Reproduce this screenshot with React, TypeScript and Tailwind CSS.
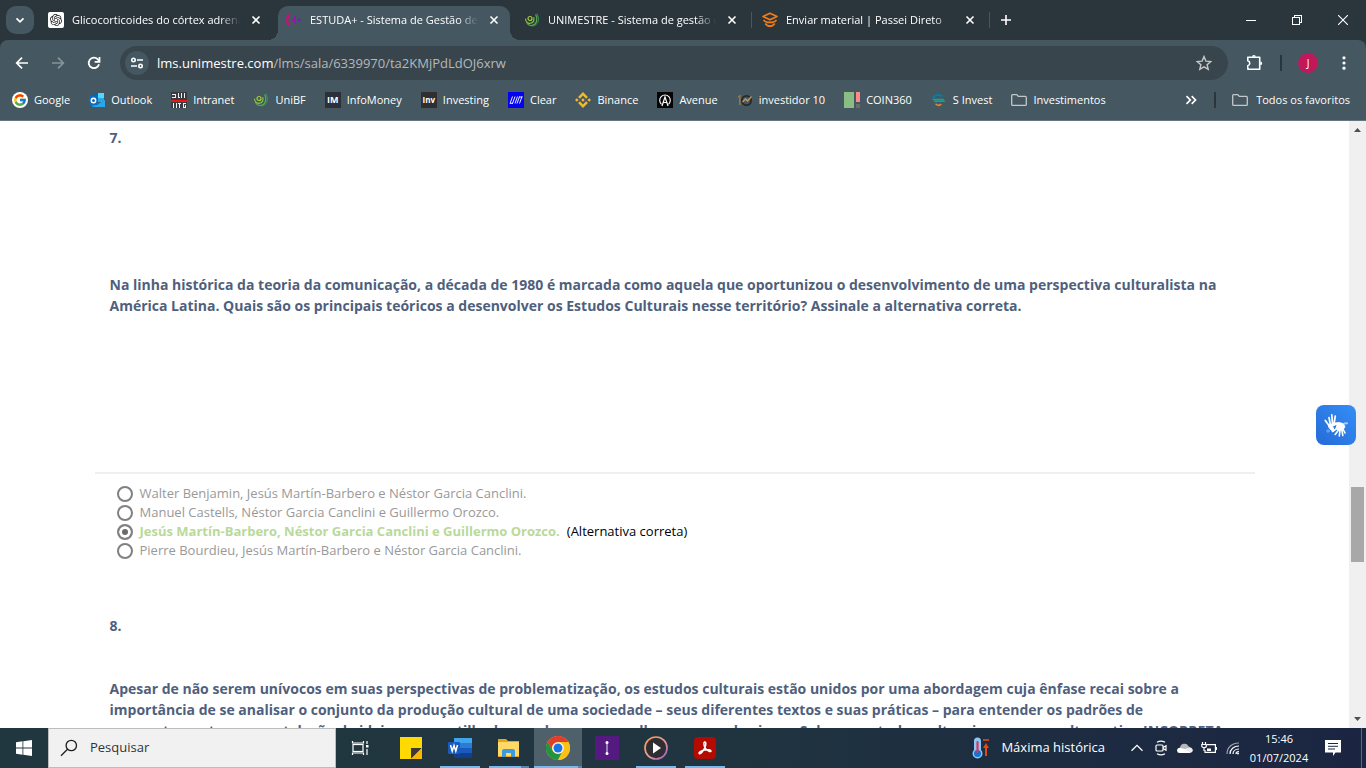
import React from 'react';
import { FcGoogle } from 'react-icons/fc';
import { SiOpenai, SiBinance } from 'react-icons/si';

interface IconProps {
  className?: string;
}

interface Tab {
  title: string;
  icon: React.ReactNode;
  active?: boolean;
  separator?: boolean;
}

interface Bookmark {
  label: string;
  icon: React.ReactNode;
}

interface Option {
  text: string;
  correct?: boolean;
}

/* Favicons */

const EstudaIcon = () => (
  <svg viewBox="0 0 16 16" className="size-4">
    <path d="M2.800 3.200C.6 5.500.6 10.500 2.800 12.800" fill="none" stroke="#e6007e" strokeWidth="2" strokeLinecap="round" />
    <path d="M6 8h3" stroke="#b00ba0" strokeWidth="1.600" />
    <path d="M9 5v6" stroke="#9c10b4" strokeWidth="1.800" strokeLinecap="round" />
    <circle cx="13.200" cy="8" r="1.500" fill="#7d12cf" />
  </svg>
);

const UnimestreIcon = () => (
  <svg viewBox="0 0 16 16" className="size-4" fill="none" strokeLinecap="round">
    <circle cx="6" cy="6.500" r="2" stroke="#a6ce39" strokeWidth="1.200" />
    <path d="M1.500 7c.3 3.300 2.500 4.600 4.800 4.300 2.600-.4 4-2.600 3.600-5.800" stroke="#8cc63f" strokeWidth="1.100" />
    <path d="M3 11.500c3 3.400 8 2.200 9.400-1.700.8-2.500.4-5.300-.6-7" stroke="#5bb04b" strokeWidth="1.100" />
    <path d="M8 14c4.500-.3 7-3.800 6.300-8-.2-1.600-.6-2.900-1.200-4" stroke="#2f9e5b" strokeWidth="1" />
  </svg>
);

const PasseiIcon = () => (
  <svg viewBox="0 0 16 16" className="size-4" fill="none" stroke="#f57c14" strokeWidth="1.700" strokeLinejoin="round">
    <path d="M8 1.300l7 3.200-7 3.200-7-3.200z" />
    <path d="M1.500 8c1 1.300 3 2.200 4.200 2.300h4.600c1.200-.1 3.200-1 4.200-2.300" />
    <path d="M3.300 11.500c2.300 3.600 7.100 3.600 9.400 0" />
  </svg>
);

const OutlookIcon = () => (
  <svg viewBox="0 0 16 16" className="size-4">
    <path d="M4 1h11v9H4z" fill="#28a8ea" />
    <path d="M9 1h6v5H9z" fill="#50d9ff" />
    <path d="M4 1h5v4H4z" fill="#0364b8" />
    <path d="M3 8l6.500 4L16 8v7H3z" fill="#1490df" />
    <path d="M16 8v7H4z" fill="#28a8ea" />
    <rect y="4" width="9" height="9" rx="1" fill="#0f6cbd" />
    <circle cx="4.500" cy="8.500" r="2.200" fill="none" stroke="#fff" strokeWidth="1.400" />
  </svg>
);

const IntranetIcon = () => (
  <svg viewBox="0 0 16 16" className="size-4" shapeRendering="crispEdges">
    <rect width="16" height="16" fill="#383c3f" />
    <path d="M1 2.500h4M1 5.500h4M4.500 2v4M7.500 1v5M10.500 1v5M13.500 1v5M7 5.500h2M2.500 11v5M5.500 11v5M8.500 11v5M7 11.500h3M15 11.500h-3M12.500 11v5M12 15.500h3M14.500 13v3" fill="none" stroke="#eee" />
    <path d="M0 8.500h16" stroke="#f5140c" strokeWidth="2" />
  </svg>
);

const BadgeIcon = ({ className, children }: { className: string; children: React.ReactNode }) => (
  <span className={`flex size-4 items-center justify-center overflow-hidden font-bold text-white ${className}`}>
    {children}
  </span>
);

const ClearIcon = () => (
  <svg viewBox="0 0 16 16" className="size-4">
    <rect width="16" height="16" fill="#0303ee" />
    <path d="M2 11.500l2.500-7M4.500 11.500l2.500-7M7 11.500l2.500-7M9 11.500l2.500-7M11.500 11.500l2.500-7M11 5h3.500M2 11.300h3" stroke="#fff" strokeWidth="0.900" />
  </svg>
);

const AvenueIcon = () => (
  <svg viewBox="0 0 16 16" className="size-4">
    <rect width="16" height="16" fill="#050505" />
    <path d="M4.500 12.300a5.300 5.300 0 1 1 7 0" fill="none" stroke="#fff" strokeWidth="1.100" />
    <path d="M5 14l3-9 3 9M6.300 10.500h3.400" fill="none" stroke="#fff" strokeWidth="1.200" />
  </svg>
);

const InvestidorIcon = () => (
  <svg viewBox="0 0 16 16" className="size-4" fill="none">
    <path d="M1 5l1.800-1.200V13" stroke="#9b7744" strokeWidth="1.500" />
    <circle cx="9.500" cy="8.500" r="4.600" stroke="#26292c" strokeWidth="1.800" />
    <path d="M5.500 10l3-3 2 2 4-4.500" stroke="#c59a5d" strokeWidth="1.300" />
  </svg>
);

const CoinIcon = () => (
  <svg viewBox="0 0 16 16" className="size-4">
    <rect width="10" height="16" fill="#8abd83" />
    <rect x="12" width="4" height="10" fill="#ff8a85" />
    <rect x="12" y="12" width="4" height="4" fill="#6a6c6e" />
  </svg>
);

const SInvestIcon = () => (
  <svg viewBox="0 0 16 16" className="size-4" fill="none">
    <path d="M11.500 4.500C9 2 3.500 2.500 2 6.500" stroke="#087ba8" strokeWidth="2" />
    <path d="M1.500 7.500H13M3 9.300h11" stroke="#12a292" strokeWidth="1.500" />
    <path d="M4.500 11.800c1.800 1.800 4 1.900 5.800.4" stroke="#e08a35" strokeWidth="1.600" />
  </svg>
);

const FolderIcon = () => (
  <svg viewBox="0 0 16 16" className="size-4" fill="none" stroke="#c3c7c9" strokeWidth="1.300">
    <path d="M.7 3.600c0-.6.400-1 1-1h4l1.600 1.800h7c.6 0 1 .4 1 1v7c0 .6-.4 1-1 1H1.700c-.6 0-1-.4-1-1z" />
  </svg>
);

/* Browser icons */

const CloseIcon = () => (
  <svg viewBox="0 0 16 16" className="size-4" stroke="#fff" strokeWidth="1.600">
    <path d="M4.500 4.500l7 7M11.500 4.500l-7 7" />
  </svg>
);

const BackIcon = ({ className = '' }: IconProps) => (
  <svg viewBox="0 0 16 16" className={`size-4 ${className}`} fill="none" stroke="currentColor" strokeWidth="1.700">
    <path d="M14 8H3M8 2.700L2.700 8 8 13.300" />
  </svg>
);

const ReloadIcon = () => (
  <svg viewBox="0 0 16 16" className="size-4" fill="none" stroke="#fff" strokeWidth="1.800">
    <path d="M13 9.200A5.200 5.200 0 1 1 11.800 4.400L13.300 6" />
    <path d="M13.500 2v4.800H8.700" />
  </svg>
);

const TuneIcon = () => (
  <svg viewBox="0 0 16 16" className="size-4" fill="none" stroke="#fff" strokeWidth="1.600">
    <circle cx="4.500" cy="5" r="1.700" />
    <path d="M8 5h6M2 11h6" />
    <circle cx="11.500" cy="11" r="1.700" />
  </svg>
);

const StarIcon = () => (
  <svg viewBox="0 0 16 16" className="size-4" fill="none" stroke="#c3c7c9" strokeWidth="1.400">
    <path d="M8 1.600l1.900 4.500 4.900.4-3.700 3.200 1.100 4.700L8 11.900l-4.200 2.500 1.100-4.700L1.200 6.500l4.900-.4z" />
  </svg>
);

const PuzzleIcon = () => (
  <svg viewBox="0 0 18 18" className="size-[18px]">
    <path d="M2.800 3.300h11.900v12H2.800v-3.500c2.600-.6 2.600-4.400 0-5z" fill="none" stroke="#fff" strokeWidth="1.600" strokeLinejoin="round" />
    <path d="M7 2.800a1.900 1.900 0 0 1 3.800 0zM15.300 7.400a1.900 1.900 0 0 1 0 3.800z" fill="#fff" />
  </svg>
);

/* Taskbar icons */

const WindowsIcon = () => (
  <svg viewBox="0 0 16 16" className="size-4" fill="#fff">
    <path d="M0 2.200L6.500 1.300v6.300H0zM7.300 1.200L16 0v7.600H7.300zM0 8.400h6.500v6.300L0 13.800zM7.300 8.400H16V16l-8.700-1.200z" />
  </svg>
);

const SearchIcon = () => (
  <svg viewBox="0 0 18 18" className="size-[18px] shrink-0" fill="none" stroke="#1d1d1d" strokeWidth="1.300">
    <circle cx="11.300" cy="6.500" r="5.200" />
    <path d="M7.500 10.300L1 16.800" />
  </svg>
);

const TaskViewIcon = () => (
  <svg viewBox="0 0 18 18" className="size-[18px]" fill="none" stroke="#fff" strokeWidth="1.200">
    <rect x="2" y="5.500" width="10" height="7" />
    <path d="M1.500 2v2h11V2M1.500 16v-2h11v2M16 2v3M16 10v6" />
    <rect x="15" y="6" width="2.500" height="2.500" fill="#fff" stroke="none" />
  </svg>
);

const StickyIcon = () => (
  <svg viewBox="0 0 22 22" className="size-[22px]">
    <path d="M0 0h22v22H0z" fill="#ffda00" />
    <path d="M11 22V11h11z" fill="#3d3a36" />
    <path d="M22 11v11H11z" fill="#f9b800" />
  </svg>
);

const WordIcon = () => (
  <svg viewBox="0 0 24 24" className="size-6">
    <path d="M6 2h18v5H6z" fill="#41a5ee" />
    <path d="M6 7h18v5H6z" fill="#2b7cd3" />
    <path d="M6 12h18v5H6z" fill="#185abd" />
    <path d="M6 17h18v5H6z" fill="#103f91" />
    <rect y="6" width="12" height="12" rx="1" fill="#185abd" />
    <path d="M2.500 9l1.700 6.200L6 9.500l1.800 5.700L9.500 9" fill="none" stroke="#fff" strokeWidth="1.500" />
  </svg>
);

const ExplorerIcon = () => (
  <svg viewBox="0 0 24 22" className="h-[22px] w-6">
    <path d="M1 2h8l2 2h11v16H1z" fill="#e8a317" />
    <path d="M1 5h21v14H1z" fill="#ffd867" />
    <path d="M5 20v-6c0-1 .7-2 2-2h9c1.300 0 2 1 2 2v6h-4v-4H9v4z" fill="#3d9bdc" />
  </svg>
);

const ChromeIcon = () => (
  <svg viewBox="0 0 24 24" className="size-6">
    <circle cx="12" cy="12" r="12" fill="#fbc116" />
    <path d="M1.600 6A12 12 0 0 1 22.400 6H12a6 6 0 0 0-5.200 9z" fill="#e33b2e" />
    <path d="M1.600 6l5.200 9A6 6 0 0 0 12 18l3.500-.9L12 24A12 12 0 0 1 1.600 6z" fill="#229342" />
    <path d="M22.400 6A12 12 0 0 1 12 24l5.200-9A6 6 0 0 0 12 6z" fill="#fbc116" />
    <circle cx="12" cy="12" r="5.800" fill="#fff" />
    <circle cx="12" cy="12" r="4.500" fill="#1a73e8" />
  </svg>
);

const PurpleIcon = () => (
  <svg viewBox="0 0 24 24" className="size-6">
    <path d="M0 0h24v24H0z" fill="#551a80" />
    <path d="M12 6v12" stroke="#e9dff0" strokeWidth="1" />
    <circle cx="12" cy="6.500" r="1.500" fill="#fff" />
    <circle cx="12" cy="17.500" r="1.500" fill="#fff" />
  </svg>
);

const MediaIcon = () => (
  <svg viewBox="0 0 24 24" className="size-6">
    <defs>
      <linearGradient id="media-ring" x1="0" y1="0" x2="1" y2="1">
        <stop offset="0" stopColor="#ff9348" />
        <stop offset="0.500" stopColor="#e7a093" />
        <stop offset="1" stopColor="#a455c8" />
      </linearGradient>
    </defs>
    <circle cx="12" cy="12" r="11" fill="#2f2f33" stroke="url(#media-ring)" strokeWidth="1.700" />
    <path d="M9 6.500l8 5.500-8 5.500z" fill="#fff" />
  </svg>
);

const AcrobatIcon = () => (
  <svg viewBox="0 0 22 22" className="size-[22px]">
    <rect width="22" height="22" rx="4" fill="#b30b00" />
    <path d="M10.500 5c1.700-.5 1.600 2.500.5 5.300C9.600 13.700 6.700 17.500 5.300 16.600c-1.200-1 2-3 5.200-3.600 3.400-.7 6.500-.4 6.500.9 0 1.500-3.300.3-5.300-2.300-1.600-2-2.500-6-1.200-6.600z" fill="none" stroke="#fff" strokeWidth="1.500" />
  </svg>
);

const ThermometerIcon = () => (
  <svg viewBox="0 0 20 24" className="h-6 w-5">
    <path d="M3 5a3.500 3.500 0 0 1 7 0v9a5 5 0 1 1-7 0z" fill="#8cc8f5" />
    <circle cx="6.500" cy="17.500" r="3.500" fill="#1672d4" />
    <path d="M6.500 6v10" stroke="#d8375c" strokeWidth="2.200" strokeLinecap="round" />
    <path d="M12 4h6" stroke="#e8490f" strokeWidth="1.600" />
    <path d="M12 12l3-5 3 5h-2v8h-2v-8z" fill="#e8490f" />
  </svg>
);

const ChevronUpIcon = () => (
  <svg viewBox="0 0 16 16" className="size-4" fill="none" stroke="#fff" strokeWidth="1.300">
    <path d="M2.500 10.800L8 5.300l5.500 5.500" />
  </svg>
);

const MeetIcon = () => (
  <svg viewBox="0 0 16 16" className="size-4" fill="none" stroke="#fff" strokeWidth="1.200">
    <rect x="3" y="5" width="7" height="6" rx="1" />
    <path d="M10 7.500l3-1.800v4.600l-3-1.800M4 2.300c2.500-1.400 5.500-1.400 8 0M4 13.700c2.500 1.400 5.500 1.400 8 0" />
  </svg>
);

const CloudIcon = () => (
  <svg viewBox="0 0 16 16" className="size-4">
    <path d="M3 8a4.500 4.500 0 0 1 8.500-1.800A3.700 3.700 0 0 1 12 13H4z" fill="#b5b7bc" />
    <path d="M0 10.500A2.800 2.800 0 0 1 4.500 8.300c3 .2 6 1.800 9.500 4.200-.5.400-1 .5-1.800.5H3A2.800 2.800 0 0 1 0 10.500z" fill="#fff" />
    <path d="M7 9l6-1.600c3 .4 3.600 3.600 1.500 5.200z" fill="#eceef0" />
  </svg>
);

const BatteryIcon = () => (
  <svg viewBox="0 0 16 16" className="size-4" fill="none" stroke="#fff" strokeWidth="1.200">
    <path d="M6 4.600h8.400v7.800H4V10M15.600 7v3" />
    <path d="M1.500 2v2.500M4.500 2v2.500M.8 4.500h4.500v1.800C5.300 8 .8 8 .8 6.300zM3 7.500V11" />
    <path d="M6 8.500h4v2.500H6z" fill="#fff" stroke="none" />
  </svg>
);

const WifiIcon = () => (
  <svg viewBox="0 0 16 16" className="size-4" fill="none" strokeWidth="1.200">
    <path d="M2 14C2 7.500 7 3 14 3" stroke="#9aa3b2" />
    <path d="M5 14c0-4.500 3.800-8 9-8" stroke="#fff" />
    <path d="M8 14c0-3 2.500-5 6-5M11 14c0-1.500 1-2.500 3-2.500" stroke="#fff" />
    <circle cx="13" cy="13.500" r="1" fill="#fff" />
  </svg>
);

const NotificationIcon = () => (
  <svg viewBox="0 0 16 16" className="size-4">
    <path d="M0 0h16v12.500h-5.500L8 16v-3.500H0z" fill="#fff" />
    <path d="M3 3.500h10M3 6.300h10M3 9h7" stroke="#1b2a42" strokeWidth="1" />
  </svg>
);

const HandsIcon = () => (
  <svg viewBox="0 0 24 24" className="size-6" fill="none" stroke="#fff" strokeLinecap="round" strokeLinejoin="round">
    <path d="M6.500 12.500L5 4.500M8.500 11L7.800 1.800M10 11L11.300 3M5.300 13L1.300 7.500" strokeWidth="1.700" />
    <path d="M5 12l5.500-2 2 1.500-4 1.500 1.500 4-2.500.5-2.500-3z" fill="#fff" strokeWidth="1" />
    <path d="M14.500 17l-3.300 4.500M16 17l-.7 6M17.800 16.500l1 6M13.500 15l-5 3.500M18.500 15l2.500 5" strokeWidth="1.600" />
    <path d="M8.500 10.200l7-.6 4 1.200 1.500 3.200-2.500 3-4.500.4-2-2 1-3.200z" fill="#fff" strokeWidth="1" />
    <path d="M20.500 10.500l2.500-.3" stroke="#a9cbfb" strokeWidth="2" />
    <circle cx="4" cy="18" r="1.200" stroke="#8db9f8" strokeWidth="0.800" />
  </svg>
);

/* Data */

const tabs: Tab[] = [
  {
    title: 'Glicocorticoides do córtex adrenal',
    icon: (
      <span className="flex size-4 items-center justify-center rounded-xs bg-white">
        <SiOpenai className="size-3 text-[#222]" />
      </span>
    ),
  },
  { title: 'ESTUDA+ - Sistema de Gestão de Ensino', icon: <EstudaIcon />, active: true },
  { title: 'UNIMESTRE - Sistema de gestão educacional', icon: <UnimestreIcon />, separator: true },
  { title: 'Enviar material | Passei Direto', icon: <PasseiIcon />, separator: true },
];

const bookmarks: Bookmark[] = [
  {
    label: 'Google',
    icon: (
      <span className="flex size-4 items-center justify-center rounded-full bg-white">
        <FcGoogle className="size-3.5" />
      </span>
    ),
  },
  { label: 'Outlook', icon: <OutlookIcon /> },
  { label: 'Intranet', icon: <IntranetIcon /> },
  { label: 'UniBF', icon: <UnimestreIcon /> },
  { label: 'InfoMoney', icon: <BadgeIcon className="bg-[#2b303b] text-[9px]">IM</BadgeIcon> },
  { label: 'Investing', icon: <BadgeIcon className="bg-[#2f2f2f] text-[8px]">Inv</BadgeIcon> },
  { label: 'Clear', icon: <ClearIcon /> },
  { label: 'Binance', icon: <SiBinance className="size-4 text-[#f3ba2f]" /> },
  { label: 'Avenue', icon: <AvenueIcon /> },
  { label: 'investidor 10', icon: <InvestidorIcon /> },
  { label: 'COIN360', icon: <CoinIcon /> },
  { label: 'S Invest', icon: <SInvestIcon /> },
  { label: 'Investimentos', icon: <FolderIcon /> },
];

const options: Option[] = [
  { text: 'Walter Benjamin, Jesús Martín-Barbero e Néstor Garcia Canclini.' },
  { text: 'Manuel Castells, Néstor Garcia Canclini e Guillermo Orozco.' },
  { text: 'Jesús Martín-Barbero, Néstor Garcia Canclini e Guillermo Orozco.', correct: true },
  { text: 'Pierre Bourdieu, Jesús Martín-Barbero e Néstor Garcia Canclini.' },
];

const TabStrip: React.FC = () => {
  return (
    <div className="flex h-10 items-center bg-[#2b363c]">
      <button aria-label="Pesquisar guias" className="mr-1.5 ml-1.5 flex size-7 shrink-0 items-center justify-center rounded-[10px] bg-[#455760]">
        <svg viewBox="0 0 16 16" className="size-4" fill="none" stroke="#fff" strokeWidth="1.800">
          <path d="M4.500 6.300L8 9.800l3.500-3.500" />
        </svg>
      </button>

      {tabs.map((tab) => (
        <div key={tab.title} className="flex h-full max-w-[238px] min-w-0 flex-1 items-end">
          <div className={`relative flex h-[34px] min-w-0 flex-1 items-center gap-2 px-2 pb-1.5 ${tab.active ? 'rounded-t-[10px] bg-[#455760]' : ''}`}>
            {tab.active && (
              <>
                <span className="absolute bottom-0 -left-2.5 size-2.5 bg-[radial-gradient(circle_at_0_0,transparent_10px,#455760_10px)]" />
                <span className="absolute -right-2.5 bottom-0 size-2.5 bg-[radial-gradient(circle_at_100%_0,transparent_10px,#455760_10px)]" />
              </>
            )}
            <span className="shrink-0">{tab.icon}</span>
            <span className="min-w-0 flex-1 overflow-hidden [mask-image:linear-gradient(to_right,#000_88%,transparent)] text-[11px] leading-4 whitespace-nowrap text-white">
              {tab.title}
            </span>
            <button aria-label="Fechar guia" className="shrink-0">
              <CloseIcon />
            </button>
          </div>
          <div className="flex h-full w-1.5 shrink-0 items-center justify-center">
            {tab.separator && <span className="h-4 w-px bg-[#455760]" />}
          </div>
        </div>
      ))}

      <button aria-label="Nova guia" className="flex size-7 shrink-0 items-center justify-center">
        <svg viewBox="0 0 16 16" className="size-4" stroke="#fff" strokeWidth="1.600">
          <path d="M8 3v10M3 8h10" />
        </svg>
      </button>

      <div className="ml-auto flex">
        <button aria-label="Minimizar" className="flex h-10 w-[46px] items-center justify-center">
          <span className="h-px w-2.5 bg-white" />
        </button>
        <button aria-label="Restaurar" className="flex h-10 w-[46px] items-center justify-center">
          <svg viewBox="0 0 10 10" className="size-2.5" fill="none" stroke="#fff" shapeRendering="crispEdges">
            <path d="M.5 2.500h7v7h-7zM2.500 2V.5h7v7H8" />
          </svg>
        </button>
        <button aria-label="Fechar" className="flex h-10 w-[46px] items-center justify-center">
          <svg viewBox="0 0 10 10" className="size-2.5" stroke="#fff" strokeWidth="1.100">
            <path d="M0 0l10 10M10 0L0 10" />
          </svg>
        </button>
      </div>
    </div>
  );
};

const Toolbar: React.FC = () => {
  return (
    <div className="bg-[#2b363c]">
      <div className="flex items-center rounded-t-lg bg-[#455760] px-1 pt-1.5 pb-1.5">
        <button aria-label="Voltar" className="flex w-9 justify-center text-white">
          <BackIcon />
        </button>
        <button aria-label="Avançar" className="flex w-9 justify-center text-[#89949a]">
          <BackIcon className="rotate-180" />
        </button>
        <button aria-label="Recarregar" className="flex w-9 justify-center">
          <ReloadIcon />
        </button>

        <div className="mx-2 flex h-[34px] flex-1 items-center rounded-full bg-[#39454c] pr-4 pl-[5px]">
          <button aria-label="Informações do site" className="flex size-6 shrink-0 items-center justify-center rounded-full bg-[#455760]">
            <TuneIcon />
          </button>
          <p className="ml-2 flex-1 text-[13px] leading-5 text-[#b3b9bc]">
            <span className="text-white">lms.unimestre.com</span>/lms/sala/6339970/ta2KMjPdLdOJ6xrw
          </p>
          <button aria-label="Adicionar aos favoritos">
            <StarIcon />
          </button>
        </div>

        <button aria-label="Extensões" className="flex w-9 justify-center">
          <PuzzleIcon />
        </button>
        <span className="mx-2 h-4 w-0.5 bg-[#2b363c]" />
        <button aria-label="Perfil" className="flex w-9 justify-center">
          <span className="flex size-5 items-center justify-center rounded-full bg-[#c2185b] text-[10px] text-white">J</span>
        </button>
        <button aria-label="Menu" className="flex w-9 justify-center">
          <svg viewBox="0 0 16 16" className="size-4" fill="#fff">
            <circle cx="8" cy="2.800" r="1.600" />
            <circle cx="8" cy="8" r="1.600" />
            <circle cx="8" cy="13.200" r="1.600" />
          </svg>
        </button>
      </div>
    </div>
  );
};

const BookmarksBar: React.FC = () => {
  return (
    <nav className="flex items-center border-b border-[#65757e] bg-[#455760] pr-4 pb-1.5 pl-3 text-[11px] leading-7 text-white">
      <div className="flex min-w-0 flex-1 gap-[19px] overflow-hidden whitespace-nowrap">
        {bookmarks.map((b) => (
          <a key={b.label} href="#" className="flex shrink-0 items-center gap-1.5">
            {b.icon}
            {b.label}
          </a>
        ))}
      </div>
      <button aria-label="Mais favoritos" className="mr-4">
        <svg viewBox="0 0 14 14" className="size-3.5" fill="none" stroke="#fff" strokeWidth="1.700">
          <path d="M2.500 3.200L6.300 7l-3.800 3.800M7.700 3.200L11.500 7l-3.800 3.800" />
        </svg>
      </button>
      <span className="mr-4 h-4 w-0.5 bg-[#2b363c]" />
      <a href="#" className="flex items-center gap-2 whitespace-nowrap">
        <FolderIcon />
        Todos os favoritos
      </a>
    </nav>
  );
};

const Quiz: React.FC = () => {
  return (
    <main className="h-full flex-1 overflow-hidden bg-white px-6 pt-1.5">
      <div className="mx-auto max-w-[1160px] text-sm leading-[21px] font-bold text-[#4f5f7d]">
        <div className="px-[15px]">
          <p>7.</p>
          <p className="mt-[126px]">
            Na linha histórica da teoria da comunicação, a década de 1980 é marcada como aquela que oportunizou o desenvolvimento de uma perspectiva culturalista na América Latina. Quais são os principais teóricos a desenvolver os Estudos Culturais nesse território? Assinale a alternativa correta.
          </p>
        </div>

        <hr className="mt-[156px] border-t-2 border-[#efefef]" />

        <div role="radiogroup" className="mt-2.5 px-[22px] text-[13px] leading-[19px] font-normal text-[#999]">
          {options.map((o) => (
            <div key={o.text} className="flex items-center">
              <label className="flex items-center gap-[7px]">
                <input
                  type="radio"
                  name="q7"
                  defaultChecked={o.correct}
                  className="size-4 appearance-none rounded-full border-2 border-[#808080] bg-white checked:bg-[#6b6b6b] checked:shadow-[inset_0_0_0_3px_white]"
                />
                <span className={o.correct ? 'font-bold text-[#b9d99a]' : ''}>{o.text}</span>
              </label>
              {o.correct && <span className="ml-[7px] text-black">(Alternativa correta)</span>}
            </div>
          ))}
        </div>

        <div className="mt-[55px] px-[15px]">
          <p>8.</p>
          <p className="mt-[42px]">
            Apesar de não serem unívocos em suas perspectivas de problematização, os estudos culturais estão unidos por uma abordagem cuja ênfase recai sobre a importância de se analisar o conjunto da produção cultural de uma sociedade – seus diferentes textos e suas práticas – para entender os padrões de comportamento e a constelação de ideias compartilhadas por homens e mulheres que nela vivem. Sobre os estudos culturais, marque a alternativa INCORRETA.
          </p>
        </div>
      </div>
    </main>
  );
};

const Scrollbar: React.FC = () => {
  return (
    <div className="flex w-[17px] shrink-0 flex-col items-center bg-[#f0f0f0]">
      <svg viewBox="0 0 17 17" className="size-[17px]" fill="#505050">
        <path d="M5 11l3.500-4 3.500 4z" />
      </svg>
      <div className="flex w-full flex-1 flex-col items-center">
        <div className="flex-[349]" />
        <div className="w-[13px] flex-[75] bg-[#a8a8a8]" />
        <div className="flex-[149]" />
      </div>
      <svg viewBox="0 0 17 17" className="size-[17px]" fill="#505050">
        <path d="M5 6l3.500 4L12 6z" />
      </svg>
    </div>
  );
};

const AppButton = ({ label, running, active, stacked, children }: { label: string; running?: boolean; active?: boolean; stacked?: boolean; children: React.ReactNode }) => (
  <button aria-label={label} className={`flex h-10 w-12 flex-col items-center ${active ? 'bg-[#4e6069]' : ''}`}>
    <span className="flex flex-1 items-center pt-0.5">{children}</span>
    <span className={`flex h-0.5 ${active ? 'w-full' : 'w-10'}`}>
      {running && <span className="flex-1 bg-[#76b9ed]" />}
      {stacked && <span className={`${active ? 'w-1' : 'w-2'} bg-[#5686ab]`} />}
    </span>
  </button>
);

const Taskbar: React.FC = () => {
  return (
    <footer className="flex h-10 shrink-0 items-center bg-linear-to-r from-[#203740] via-[#20353f] to-[#1b2542] text-white">
      <button aria-label="Iniciar" className="flex h-10 w-12 items-center justify-center">
        <WindowsIcon />
      </button>
      <label className="flex h-10 w-72 items-center gap-3 border border-[#bcbcbc] bg-[#f1f1f1] pl-[11px]">
        <SearchIcon />
        <input type="search" aria-label="Pesquisar" placeholder="Pesquisar" className="w-full text-[13px] outline-none placeholder:text-[#333]" />
      </label>
      <button aria-label="Visão de tarefas" className="mr-[3px] flex h-10 w-12 items-center justify-center">
        <TaskViewIcon />
      </button>

      <div className="flex gap-px">
        <AppButton label="Notas Autoadesivas"><StickyIcon /></AppButton>
        <AppButton label="Word" running><WordIcon /></AppButton>
        <AppButton label="Explorador de Arquivos" running stacked><ExplorerIcon /></AppButton>
        <AppButton label="Google Chrome" running active stacked><ChromeIcon /></AppButton>
        <AppButton label="Aplicativo"><PurpleIcon /></AppButton>
        <AppButton label="Reprodutor de Mídia" running><MediaIcon /></AppButton>
        <AppButton label="Adobe Acrobat" running><AcrobatIcon /></AppButton>
      </div>

      <div className="ml-auto flex items-center">
        <button className="mr-6 flex items-center gap-2.5 text-[13px] whitespace-nowrap">
          <ThermometerIcon />
          Máxima histórica
        </button>
        <div className="flex gap-2">
          <button aria-label="Mostrar ícones ocultos"><ChevronUpIcon /></button>
          <button aria-label="Reunir agora"><MeetIcon /></button>
          <button aria-label="OneDrive"><CloudIcon /></button>
          <button aria-label="Bateria"><BatteryIcon /></button>
          <button aria-label="Rede"><WifiIcon /></button>
        </div>
        <button className="ml-2 w-[60px] text-center text-[11px] leading-[19px]">
          <span className="block">15:46</span>
          <span className="block">01/07/2024</span>
        </button>
        <button aria-label="Notificações" className="mr-5 ml-4">
          <NotificationIcon />
        </button>
        <span className="mr-1 h-10 w-px bg-[#5c6780]" />
      </div>
    </footer>
  );
};

const App: React.FC = () => {
  return (
    <div className="flex h-screen flex-col overflow-hidden font-['Open_Sans','Noto_Sans',sans-serif]">
      <header className="shrink-0">
        <TabStrip />
        <Toolbar />
        <BookmarksBar />
      </header>

      <div className="relative flex min-h-0 flex-1">
        <Quiz />
        <Scrollbar />
        {/* Floating sign language widget */}
        <button
          aria-label="Conteúdo acessível em Libras"
          className="absolute top-1/2 right-2.5 -mt-5 flex size-10 items-center justify-center rounded-lg bg-linear-to-bl from-[#358ef5] to-[#256bd8]"
        >
          <HandsIcon />
        </button>
      </div>

      <Taskbar />
    </div>
  );
};

export default App;
